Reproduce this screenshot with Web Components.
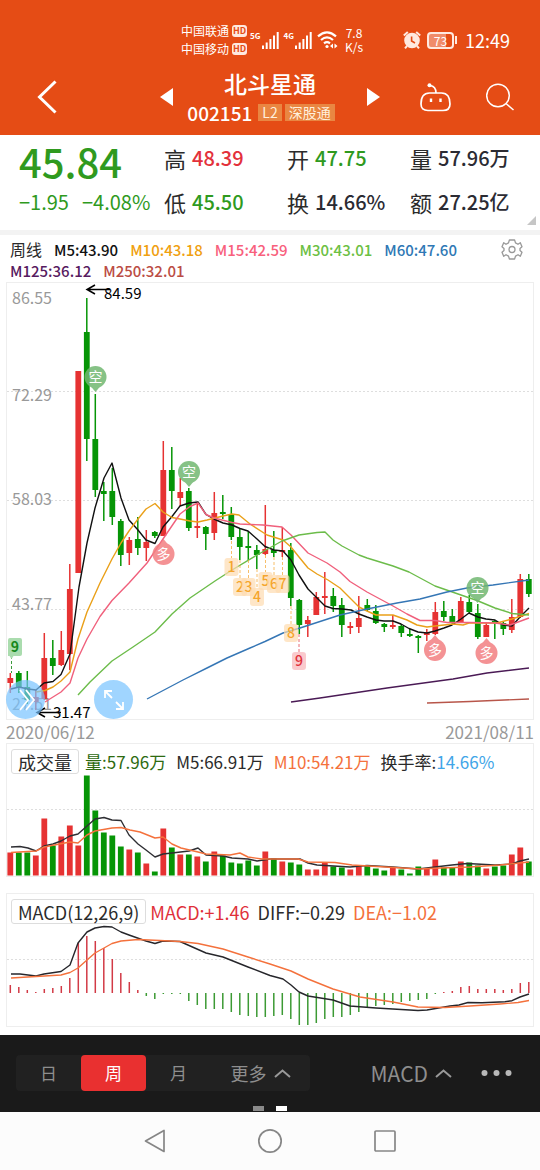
<!DOCTYPE html>
<html lang="zh-CN">
<head>
<meta charset="utf-8">
<meta name="viewport" content="width=device-width, initial-scale=1">
<title>北斗星通 002151</title>
<style>
  html, body { margin: 0; padding: 0; }
  body {
    min-height: 100vh;
    background: #fcfcfc;
    color: #2b2b2b;
    font-family: "Noto Sans CJK SC", "Noto Sans", sans-serif;
  }
</style>
</head>
<body>
<stock-app></stock-app>

<script>
const define = (name, html, setup) => {
  const template = document.createElement('template');
  template.innerHTML = html;
  customElements.define(name, class extends HTMLElement {
    connectedCallback() {
      if (this.shadowRoot) return;
      this.attachShadow({ mode: 'open' }).append(template.content.cloneNode(true));
      if (setup) setup(this.shadowRoot, this);
    }
  });
};

/* ---------- shared chart data ---------- */

const RED = '#e63232';
const GREEN = '#069506';
const xAt = i => 10.3 + 8.5 * i;

// colour, high, low, body top, body bottom
const CANDLES = [
  ['r',673,693,678,683],['g',671,693,673,687],['g',671,704,687,700],['r',690,710,697,702],
  ['r',633,700,658,699],['g',640,675,658,666],['r',631,666,650,665],['r',564,670,589,654],
  ['r',371,573,371,573],['g',298,461,332,439],['g',394,497,439,490],['g',482,521,491,494],
  ['g',468,525,491,517],['g',519,566,521,555],['r',537,565,540,553],['g',517,555,539,548],
  ['r',530,561,542,548],['g',531,538,532,536],['r',441,536,470,536],['g',447,509,470,491],
  ['r',478,506,492,498],['g',488,531,491,528],['r',502,538,526,528],['g',526,550,527,534],
  ['r',492,540,513,533],['g',495,519,512,514],['g',507,540,514,537],['g',529,560,537,547],
  ['g',531,560,546,548],['g',545,569,550,555],['r',505,555,549,554],['g',531,557,550,553],
  ['r',527,557,550,552],['g',543,606,550,598],['g',599,634,600,625],['r',616,637,620,624],
  ['r',592,615,597,615],['r',572,614,596,598],['g',588,612,596,606],['g',598,637,605,625],
  ['r',622,634,626,628],['r',596,633,618,627],['g',599,611,605,610],['g',605,624,611,623],
  ['g',623,632,624,627],['r',615,629,625,627],['g',624,637,626,633],['g',629,637,634,636],
  ['g',635,653,636,638],['r',629,641,633,635],['r',602,635,612,634],['g',601,621,611,617],
  ['g',609,625,616,623],['r',597,623,601,623],['g',595,613,602,612],['g',604,639,613,637],
  ['r',622,637,625,637],['g',620,639,621,623],['g',622,635,623,629],['r',599,633,617,630],
  ['r',574,618,579,617],['g',574,597,579,594]
];

const VOLUME_TOPS = [853,853,853,856,819,846,837,826,846,776,811,833,836,847,850,853,864,872,829,848,
  855,855,857,862,852,856,863,864,861,866,852,859,862,863,865,870,870,863,867,868,870,866,866,869,
  871,868,870,874,867,869,860,868,868,862,863,866,869,867,866,855,848,862];

const MACD_ENDS = [985,987,990,992,989,988,986,978,943,936,941,948,959,973,982,990,996,999,994,994,
  994,1001,1005,1009,1009,1009,1012,1015,1016,1017,1017,1016,1015,1019,1025,1025,1023,1019,1017,1017,
  1015,1012,1008,1006,1005,1004,1002,1001,1000,999,994,992,991,987,986,989,989,989,990,989,983,982];

const line = (points, color, width = 1.4) =>
  `<polyline points="${points}" fill="none" stroke="${color}" stroke-width="${width}" stroke-linejoin="round"/>`;
const grid = ys => ys.map(y =>
  `<path d="M7 ${y}H533" stroke="#dedede" stroke-width="1" stroke-dasharray="2 2"/>`).join('');

/* ---------- status bar ---------- */

define('signal-bars', `
  <style>
    :host { display: flex; align-items: flex-start; font-size: 8px; line-height: 8px; font-weight: 700; }
    svg { display: block; }
  </style>
  <slot></slot>
  <svg width="18" height="17" viewBox="0 0 18 17" fill="#fff">
    <rect x="1" y="13.5" width="2" height="3.5"/><rect x="4.7" y="10.5" width="2" height="6.5"/>
    <rect x="8.4" y="7" width="2" height="10"/><rect x="12" y="3.5" width="2" height="13.5"/>
    <rect x="15.7" y="0" width="2" height="17"/>
  </svg>`);

define('status-bar', `
  <style>
    :host { display: flex; justify-content: flex-end; align-items: center; padding: 22px 30px 0 0;
      height: 36px; color: #fff; }
    .carriers { display: grid; grid-template-columns: auto auto; gap: 0 3px; align-items: center;
      font-size: 12px; line-height: 18px; margin-right: 3px; }
    .hd { font-size: 9px; line-height: 12px; font-weight: 700; color: #e54c15; background: #ffe9df;
      border-radius: 3px; width: 15px; text-align: center; }
    signal-bars + signal-bars, .wifi { margin-left: 5px; }
    .speed { font-size: 12px; line-height: 14px; text-align: center; width: 18px; margin: 0 40px 0 7px; }
    .battery { display: flex; align-items: center; margin: 0 8px 0 6px; }
    .level { box-sizing: border-box; width: 27px; height: 17px; border: 2px solid #ffe9df; border-radius: 4px;
      background: linear-gradient(90deg, #f08c6a 73%, #e54c15 73%); font-size: 12px; line-height: 13px; text-align: center; }
    .cap { width: 2px; height: 8px; margin-left: 1px; background: #ffe9df; }
    time { font-size: 18px; line-height: 24px; }
    svg { display: block; flex: none; }
  </style>
  <div class="carriers">
    <span>中国联通</span><span class="hd">HD</span>
    <span>中国移动</span><span class="hd">HD</span>
  </div>
  <signal-bars>5G</signal-bars>
  <signal-bars>4G</signal-bars>
  <svg class="wifi" width="21" height="18" viewBox="0 0 21 18" fill="none" stroke="#fff" stroke-width="2.2">
    <path d="M1 5.4Q10 -2.6 19 5.4M4 9Q10 3.8 16 9M7 12.4Q10 10 13 12.4"/>
    <circle cx="10" cy="15.5" r="1.6" fill="#fff" stroke="none"/>
    <path d="M16 12.5v5l-3-2.5zM17.5 12.5v5l3-2.5z" fill="#fff" stroke="none"/>
  </svg>
  <div class="speed">7.8<br>K/s</div>
  <svg width="18" height="18" viewBox="0 0 18 18" fill="none" stroke="#ffe9df" stroke-width="2">
    <circle cx="9" cy="9.5" r="6.8" fill="#ffe9df"/>
    <path d="M.8 4.5L4.8 1M13.2 1l4 3.500M4 15l-2 2.300M14 15l2 2.300"/>
    <path d="M8.600 5.500V10l3.400 2" stroke="#e54c15" stroke-width="1.600"/>
  </svg>
  <div class="battery"><span class="level">73</span><span class="cap"></span></div>
  <time>12:49</time>`);

/* ---------- title bar ---------- */

define('title-bar', `
  <style>
    :host { display: grid; grid-template-columns: 1fr 220px 1fr; align-items: center; height: 77px; color: #fff; }
    button { display: block; border: 0; padding: 0; background: none; color: inherit; font: inherit; }
    svg { display: block; }
    .back { margin-left: 37px; justify-self: start; }
    .pager { display: flex; justify-content: space-between; align-items: center; }
    .name { display: flex; flex-direction: column; align-items: center; }
    h1 { margin: 0; font-size: 23px; line-height: 32px; font-weight: 500; }
    .code { display: flex; align-items: center; gap: 3px; padding-right: 18px; font-size: 19px;
      line-height: 28px; font-weight: 500; }
    .tag { font-size: 14px; line-height: 17px; font-weight: 400; padding: 0 4px; background: #e98642; color: #fff0dc; }
    .first { margin-left: 3px; }
    .tools { display: flex; justify-content: flex-end; gap: 34px; padding-right: 26px; }
  </style>
  <button class="back" aria-label="返回">
    <svg width="20" height="34" viewBox="0 0 20 34" fill="none" stroke="#fff" stroke-width="3"><path d="M18.500 1.500L2.500 17l16 15.500"/></svg>
  </button>
  <div class="pager">
    <button aria-label="上一只"><svg width="13" height="18" viewBox="0 0 13 18"><path d="M13 0v18L0 9z" fill="#fff"/></svg></button>
    <div class="name">
      <h1>北斗星通</h1>
      <div class="code"><span>002151</span><span class="tag first">L2</span><span class="tag">深股通</span></div>
    </div>
    <button aria-label="下一只"><svg width="13" height="18" viewBox="0 0 13 18"><path d="M0 0v18L13 9z" fill="#fff"/></svg></button>
  </div>
  <div class="tools">
    <button aria-label="智能助手">
      <svg width="32" height="30" viewBox="0 0 32 30" fill="none" stroke="#fff" stroke-width="1.700">
        <path d="M9.500 11H21.500C27.500 11 30 15.500 30 22C30 26.500 27.500 28.500 23 28.500H8C3.500 28.500 1 26.500 1 22C1 15.500 3.500 11 9.500 11Z"/>
        <path d="M16 11C16 6.500 14 4 10 3.500"/>
        <circle cx="9.500" cy="3.300" r="2" fill="#fff" stroke="none"/>
        <path d="M11 16.500v3.500M20.500 16.500v3.500" stroke-width="2.400"/>
      </svg>
    </button>
    <button aria-label="搜索">
      <svg width="28" height="30" viewBox="0 0 28 30" fill="none" stroke="#fff" stroke-width="1.500">
        <circle cx="12" cy="13.500" r="11.300"/><path d="M20 21.500l7.500 6.500"/>
      </svg>
    </button>
  </div>`);

/* ---------- quote ---------- */

define('quote-item', `
  <style>
    :host { display: flex; gap: 6px; align-items: center; font-size: 20px; line-height: 30px; font-weight: 500;
      color: #2b2b33; white-space: nowrap; }
    :host([tone="up"]) b { color: #e3313b; }
    :host([tone="down"]) b { color: #2f9a1e; }
    b { font-weight: inherit; }
    span { font-size: 22px; font-weight: 400; color: #2b2b2b; }
  </style>
  <span></span><b><slot></slot></b>`,
  (root, host) => { root.querySelector('span').textContent = host.getAttribute('label'); });

define('quote-panel', `
  <style>
    :host { display: grid; grid-template-columns: 145fr 123fr 123fr 112fr; grid-template-rows: 44px 44px; align-items: center;
      box-sizing: border-box; height: 95px; padding: 1px 18px 0 19px; position: relative; background: #fff; }
    .price { font-size: 40px; line-height: 44px; font-weight: 500; color: #2f9a1e; padding-top: 6px; }
    .change { display: flex; gap: 13px; font-size: 20px; line-height: 30px; font-weight: 400; color: #2f9a1e; white-space: nowrap; }
    .more { position: absolute; right: 4px; bottom: 5px; display: block; }
  </style>
  <div class="price">45.84</div>
  <quote-item label="高" tone="up">48.39</quote-item>
  <quote-item label="开" tone="down">47.75</quote-item>
  <quote-item label="量">57.96万</quote-item>
  <div class="change"><span>−1.95</span><span>−4.08%</span></div>
  <quote-item label="低" tone="down">45.50</quote-item>
  <quote-item label="换">14.66%</quote-item>
  <quote-item label="额">27.25亿</quote-item>
  <svg class="more" width="9" height="9" viewBox="0 0 9 9"><path d="M9 0v9H0z" fill="#c6c6c6"/></svg>`);

/* ---------- moving average legend ---------- */

define('ma-legend', `
  <style>
    :host { display: flex; box-sizing: border-box; height: 52px; padding: 4px 17px 1px 10px; border-top: 5px solid #f3f3f3; background: #fff; }
    .list { display: flex; flex-wrap: wrap; column-gap: 12px; flex: 1; align-content: flex-start;
      font-size: 15px; line-height: 21px; font-weight: 500; }
    .period { font-size: 16px; font-weight: 400; }
    button { border: 0; padding: 0; background: none; height: 21px; }
    svg { display: block; }
  </style>
  <div class="list">
    <span class="period">周线</span>
    <span style="color:#111">M5:43.90</span>
    <span style="color:#f0a010">M10:43.18</span>
    <span style="color:#f8607c">M15:42.59</span>
    <span style="color:#6cc043">M30:43.01</span>
    <span style="color:#2f78b5">M60:47.60</span>
    <span style="color:#571a60">M125:36.12</span>
    <span style="color:#bb4c44">M250:32.01</span>
  </div>
  <button aria-label="设置">
    <svg width="22" height="21" viewBox="-11 -10.500 22 21" fill="none" stroke="#999" stroke-width="1.300" stroke-linejoin="round">
      <path d="M-2.600 -9.500H2.600L3.500 -6.600L6 -5.200L8.300 -6.800L10 -2.800L8 -1V1L10 2.800L8.300 6.800L6 5.200L3.500 6.600L2.600 9.500H-2.600L-3.500 6.600L-6 5.200L-8.300 6.800L-10 2.800L-8 1V-1L-10 -2.800L-8.300 -6.800L-6 -5.200L-3.500 -6.600Z"/>
      <circle r="3"/>
    </svg>
  </button>`);

/* ---------- candlestick chart ---------- */

const candle = ([c, high, low, top, bottom], i) => {
  const x = xAt(i), fill = c === 'r' ? RED : GREEN;
  return `<path d="M${x} ${high}V${low}" stroke="${fill}" stroke-width="1.500"/>` +
    `<rect x="${x - 2.9}" y="${top}" width="5.8" height="${bottom - top}" fill="${fill}"/>`;
};

const signal = (x, y, kind) => {
  const short = kind === '空';
  const color = short ? '#72b872' : '#f37f82';
  const tip = short ? `M${x - 5} ${y + 9}L${x} ${y + 15}L${x + 5} ${y + 9}z` : `M${x - 5} ${y - 9}L${x} ${y - 15}L${x + 5} ${y - 9}z`;
  return `<g opacity=".85"><circle cx="${x}" cy="${y}" r="11" fill="${color}"/><path d="${tip}" fill="${color}"/>` +
    `<text x="${x}" y="${y + 5}" text-anchor="middle" font-size="14" fill="#fff">${kind}</text></g>`;
};

const countTag = (x, y, from, n, text, fill) =>
  `<path d="M${x} ${from}V${y - 9}" stroke="${text}" stroke-width="1" stroke-dasharray="3 2" opacity=".7"/>` +
  `<rect x="${x - 7}" y="${y - 9}" width="14" height="18" rx="3" fill="${fill}" opacity=".7"/>` +
  `<text x="${x}" y="${y + 5}" text-anchor="middle" font-size="14" font-weight="500" fill="${text}">${n}</text>`;

define('candle-chart', `
  <style>
    :host { display: block; background: #fff; }
    .frame { position: relative; margin: 0 6px; border: 1px solid #eee; }
    svg { display: block; width: 100%; height: auto; overflow: visible; }
    .round { position: absolute; bottom: 0; width: 39px; height: 39px; border: 0; border-radius: 50%; padding: 0;
      background: rgba(120, 195, 255, .7); display: grid; place-items: center; }
    .round svg { width: 26px; height: 26px; }
    .skip { left: -1px; }
    .zoom { left: 87px; }
    .dates { display: flex; justify-content: space-between; padding: 0 6px; font-size: 17px; line-height: 23px; color: #999; }
  </style>
  <div class="frame">
    <svg id="plot" viewBox="7 283 526 436" role="img" aria-label="周线"></svg>
    <button class="round skip" aria-label="快进">
      <svg viewBox="0 0 26 26" fill="none" stroke="#fff" stroke-width="1.800"><path d="M7 3l8 10-8 10M13 3l8 10-8 10"/></svg>
    </button>
    <button class="round zoom" aria-label="放大">
      <svg viewBox="0 0 26 26" fill="none" stroke="#fff" stroke-width="1.800"><path d="M4 11V4h7M4 4l7 7M22 15v7h-7M22 22l-7-7"/></svg>
    </button>
  </div>
  <div class="dates"><span>2020/06/12</span><span>2021/08/11</span></div>`,
  root => {
    const axis = [['86.55', 304], ['72.29', 401], ['58.03', 505], ['43.77', 610], ['27.51', 710]];
    const counts = [[231.5,567,541,1],[240,587,560,2],[248.5,587,560,3],[257,597,569,4],[265.5,581,555,5],
      [274,584,557,6],[282.5,584,557,7],[291,633,606,8]];
    root.getElementById('plot').innerHTML =
      grid([391.5, 500.5, 609.5]) +
      axis.map(([t, y]) => `<text x="12" y="${y}" font-size="16" fill="#999">${t}</text>`).join('') +
      CANDLES.map(candle).join('') +
      line('11,689 19,687 28,689 36,690 44,683 53,681.500 61,674.500 70,654 79,587 87,543 95,508 104,478 112,463 121,498 129,520 138,530 146,540 155,543.500 163,527 172,516.500 180,506 189,503 198,502 206,514.500 214,519 223,523 232,525 240,528.500 248,531 257,539 265,546.500 274,550 283,551 291,560 299,575 308,589 317,598 325,606 333,608.500 342,609 351,610 359,614 367,617 376,620 384,621 393,621 401,624 409,628.500 418,632 427,633 435,631 444,628 452,625 461,619 469,613 478,617 486,619 495,620 503,625 512,626 520,617 529,608', '#111') +
      line('36,692 45,690.500 53,687 61,681 70,672 78,639 87,612 100,583 112,559 121,543 129,531 138,519 146,509 155,503.500 163,512 172,517.500 180,519 190,521 198,522 207,520 223,516 232,514 239,515 250,524 267,535 283,540 291,547 299,557 308,568 317,574 328,580 340,588 350,598 359,607 367,611 376,615 393,615 407,620 417,625 427,627 435,626 453,624 463,625 469,623 487,623 497,623 512,619 529,613.500', '#eaa019') +
      line('45,702 61,692 70,683 78,658 87,639 100,616.500 112,600.500 129,583 147,563 163,539 180,514 190,506.500 198,503 206,514.500 214,518 232,522.500 240,524 263,525 282,527 291,535 308,553 327,563 340,572 350,581.500 367,592 393,606 407,614 420,620.500 435,620.500 447,622.500 470,622.500 495,623 510,625 529,618', '#f0607c') +
      line('78,695 90,682 112,661 133,647 155,632 172,614 190,598 215,581 232,570 257,555 282,541 299,535 317,532.500 325,532 333,540 342,546 359,555 367,558 393,566 409,572 435,586 461,595 477,600.500 495,608 512,613.500 529,615', '#6cbc4a') +
      line('147,699 183,680 207,668 227,658 250,648 265,641.500 283,633 300,628 340,615 367,609 397,603 420,599 447,592 467,588 493,585 529,580', '#3576b5') +
      line('291,702 320,698 387,688 453,679 487,673 529,668', '#4a1a55') +
      line('427,703 470,701.500 529,699', '#b8564a') +
      counts.map(([x, y, f, n]) => countTag(x, y, f, n, '#f5a52d', '#fddcb0')).join('') +
      countTag(299, 661, 634, 9, '#e0303a', '#f8b4b8') +
      '<path d="M11.500 656V673" stroke="#3c9a3c" stroke-width="1" stroke-dasharray="3 2"/>' +
      '<path d="M10 638h10q2 0 2 2v14q0 2-2 2h-6.500l-2 3-2-3h-1.500V640q0-2 2-2z" fill="#aadcae"/>' +
      '<text x="15" y="652" text-anchor="middle" font-size="14" font-weight="700" fill="#16881c">9</text>' +
      signal(95.5, 377, '空') + signal(189, 472, '空') + signal(477.5, 588, '空') +
      signal(163.5, 554, '多') + signal(435, 650, '多') + signal(486.5, 653, '多') +
      '<g fill="none" stroke="#000" stroke-width="1.500"><path d="M110 289.500H87M95 285l-8 4.500 8 4.500M61 712.500H37M45 708l-8 4.500 8 4.500"/></g>' +
      '<g font-size="15" fill="#000"><text x="104" y="299">84.59</text><text x="53" y="718">31.47</text></g>';
  });

/* ---------- indicator panels ---------- */

define('indicator-panel', `
  <style>
    :host { display: block; background: #fff; padding: 0 6px; }
    .frame { border: 1px solid #eee; }
    .head { display: flex; align-items: center; padding: 5px 0 0 4px; line-height: 24px; gap: var(--head-gap, 10px);
      white-space: nowrap; font-size: 17px; }
    button { box-sizing: border-box; height: 25px; margin-right: -4px; padding: 0 6px; border: 1px solid #ddd; border-radius: 3px;
      background: #fff; color: #2b2b2b; font: inherit; font-size: 18px; line-height: 22px; }
    ::slotted(svg) { display: block; width: 100%; height: auto; }
  </style>
  <div class="frame">
    <div class="head"><button><slot name="title"></slot></button><slot name="value"></slot></div>
    <slot></slot>
  </div>`);

define('volume-chart', `
  <style>
    :host { display: block; background: #fff; padding-bottom: 16px; }
    .plain { color: #2b2b2b; } .vol { color: #2d6a10; } .m10 { color: #f4713c; } .rate { color: #41a5e8; }
  </style>
  <indicator-panel>
    <span slot="title">成交量</span>
    <span slot="value" class="vol">量:57.96万</span>
    <span slot="value" class="plain">M5:66.91万</span>
    <span slot="value" class="m10">M10:54.21万</span>
    <span slot="value" class="plain">换手率:<span class="rate">14.66%</span></span>
    <svg viewBox="7 774 526 102" role="img" aria-label="成交量"></svg>
  </indicator-panel>`,
  root => {
    root.querySelector('svg').innerHTML = grid([809.5]) +
      VOLUME_TOPS.map((y, i) => `<rect x="${xAt(i) - 2.9}" y="${y - .5}" width="5.8" height="${876 - y}" fill="${CANDLES[i][0] === 'r' ? RED : GREEN}"/>`).join('') +
      line('11,847 20,846.500 28,848 36,851 44,846 53,844 61,841 70,836 78,834 87,826 95,819 104,817.500 112,820 121,820.500 129,835 138,844 146,850 155,857 163,854 172,853 189,851 198,848 206,855 223,856 232,858 248,859 257,861 270,859 300,859 308,863 317,865 350,867 367,865.500 393,867 418,869 435,867 452,865 467,863.500 495,865 512,864 520,861 529,859', '#2e2e33') +
      line('11,852.500 36,851 44,847 70,842 78,843 87,835 95,831 112,828 121,827.500 130,830 140,832 155,838 163,837 172,844 181,848 198,852 206,854 230,855 240,853 248,857 262,859 298,859 308,862 335,862.500 352,865 385,867 420,869 440,868 470,867 500,865 529,862', '#f4713c');
  });

define('macd-chart', `
  <style>
    :host { display: block; background: #fff; padding-bottom: 8px; --head-gap: 8px; }
    span { font-size: 18px; }
    .macd { color: #e0303a; } .diff { color: #2b2b2b; } .dea { color: #f4713c; }
  </style>
  <indicator-panel>
    <span slot="title">MACD(12,26,9)</span>
    <span slot="value" class="macd">MACD:+1.46</span>
    <span slot="value" class="diff">DIFF:−0.29</span>
    <span slot="value" class="dea">DEA:−1.02</span>
    <svg viewBox="7 924 526 102" role="img" aria-label="MACD"></svg>
  </indicator-panel>`,
  root => {
    root.querySelector('svg').innerHTML = grid([959.5]) +
      MACD_ENDS.map((y, i) => `<path d="M${xAt(i)} 993V${y}" stroke="${y < 993 ? '#d23a46' : '#3c9a34'}" stroke-width="1.500"/>`).join('') +
      line('11,974 20,974 36,976 44,974 61,971.500 70,965 78,943 87,932 95,928 104,926.500 112,927 121,932 129,935 146,941 155,943.500 163,941 180,941.500 206,953 223,957 248,967 270,975.500 283,979 291,985 299,992 308,996 333,1000 350,1006 376,1008 418,1010.500 427,1010 450,1006 459,1005 468,1002.500 482,1002.700 505,1001.700 512,1000.700 520,997 529,994', '#26262b') +
      line('11,978 36,976.500 61,975 70,972.500 78,968 87,960 95,953 104,948 112,943.500 121,941 138,939.500 160,940.500 180,941.500 198,943.500 223,949 248,957 270,964 291,971 308,979 333,989 360,997 393,1002 418,1007 445,1007.500 470,1006 500,1004 518,1002.500 529,1000.500', '#f4713c');
  });

/* ---------- bottom bars ---------- */

define('period-bar', `
  <style>
    :host { display: block; box-sizing: border-box; height: 77px; padding: 20px 28px 0 16px; background: #1a1a1a; position: relative; }
    .row { display: flex; justify-content: space-between; align-items: center; }
    .group { display: flex; background: #212121; border-radius: 4px; }
    button { display: flex; align-items: center; justify-content: center; gap: 7px; border: 0; padding: 0; background: none;
      color: #8e8e8e; font: inherit; font-size: 17px; line-height: 24px; height: 36px; width: 65px; }
    .on { background: #e93030; color: #fff; border-radius: 4px; }
    .more { width: 99px; font-size: 18px; }
    .right { display: flex; gap: 29px; }
    .right button { width: auto; font-size: 21px; }
    .pages { position: absolute; bottom: 1px; left: 0; right: 0; display: flex; justify-content: center; gap: 12px; }
    .pages i { width: 11px; height: 5px; background: #8a8a8a; }
    .pages .now { background: #fff; }
    svg { display: block; }
  </style>
  <div class="row">
    <div class="group">
      <button>日</button><button class="on">周</button><button>月</button>
      <button class="more">更多<svg width="17" height="9" viewBox="0 0 17 9" fill="none" stroke="#999" stroke-width="2"><path d="M1 8l7.500-6.500L16 8"/></svg></button>
    </div>
    <div class="right">
      <button>MACD<svg width="17" height="9" viewBox="0 0 17 9" fill="none" stroke="#999" stroke-width="2"><path d="M1 8l7.500-6.500L16 8"/></svg></button>
      <button aria-label="更多操作"><svg width="31" height="8" viewBox="0 0 31 8" fill="#b8b8b8"><circle cx="3.500" cy="4" r="3"/><circle cx="15.500" cy="4" r="3"/><circle cx="27.500" cy="4" r="3"/></svg></button>
    </div>
  </div>
  <div class="pages"><i></i><i class="now"></i></div>`);

define('system-nav', `
  <style>
    :host { display: grid; grid-template-columns: repeat(3, 1fr); align-items: center; justify-items: center; height: 58px;
      padding: 0 98px; background: #fcfcfc; }
    button { border: 0; padding: 0; background: none; }
    svg { display: block; }
  </style>
  <button aria-label="返回"><svg width="24" height="26" viewBox="0 0 24 26" fill="none" stroke="#868686" stroke-width="1.700" stroke-linejoin="round"><path d="M21 2.500v21L2.500 13z"/></svg></button>
  <button aria-label="主页"><svg width="26" height="26" viewBox="0 0 26 26" fill="none" stroke="#868686" stroke-width="1.700"><circle cx="13" cy="13" r="11.200"/></svg></button>
  <button aria-label="最近任务"><svg width="24" height="24" viewBox="0 0 24 24" fill="none" stroke="#868686" stroke-width="1.700"><rect x="2" y="2" width="20" height="20" rx="1"/></svg></button>`);

define('stock-app', `
  <style>
    :host { display: flex; flex-direction: column; min-height: 100vh; }
    header { background: #e54c15; }
    main { background: #fff; }
  </style>
  <header>
    <status-bar></status-bar>
    <title-bar></title-bar>
  </header>
  <main>
    <quote-panel></quote-panel>
    <ma-legend></ma-legend>
    <candle-chart></candle-chart>
    <volume-chart></volume-chart>
    <macd-chart></macd-chart>
  </main>
  <footer>
    <period-bar></period-bar>
    <system-nav></system-nav>
  </footer>`);
</script>
</body>
</html>
